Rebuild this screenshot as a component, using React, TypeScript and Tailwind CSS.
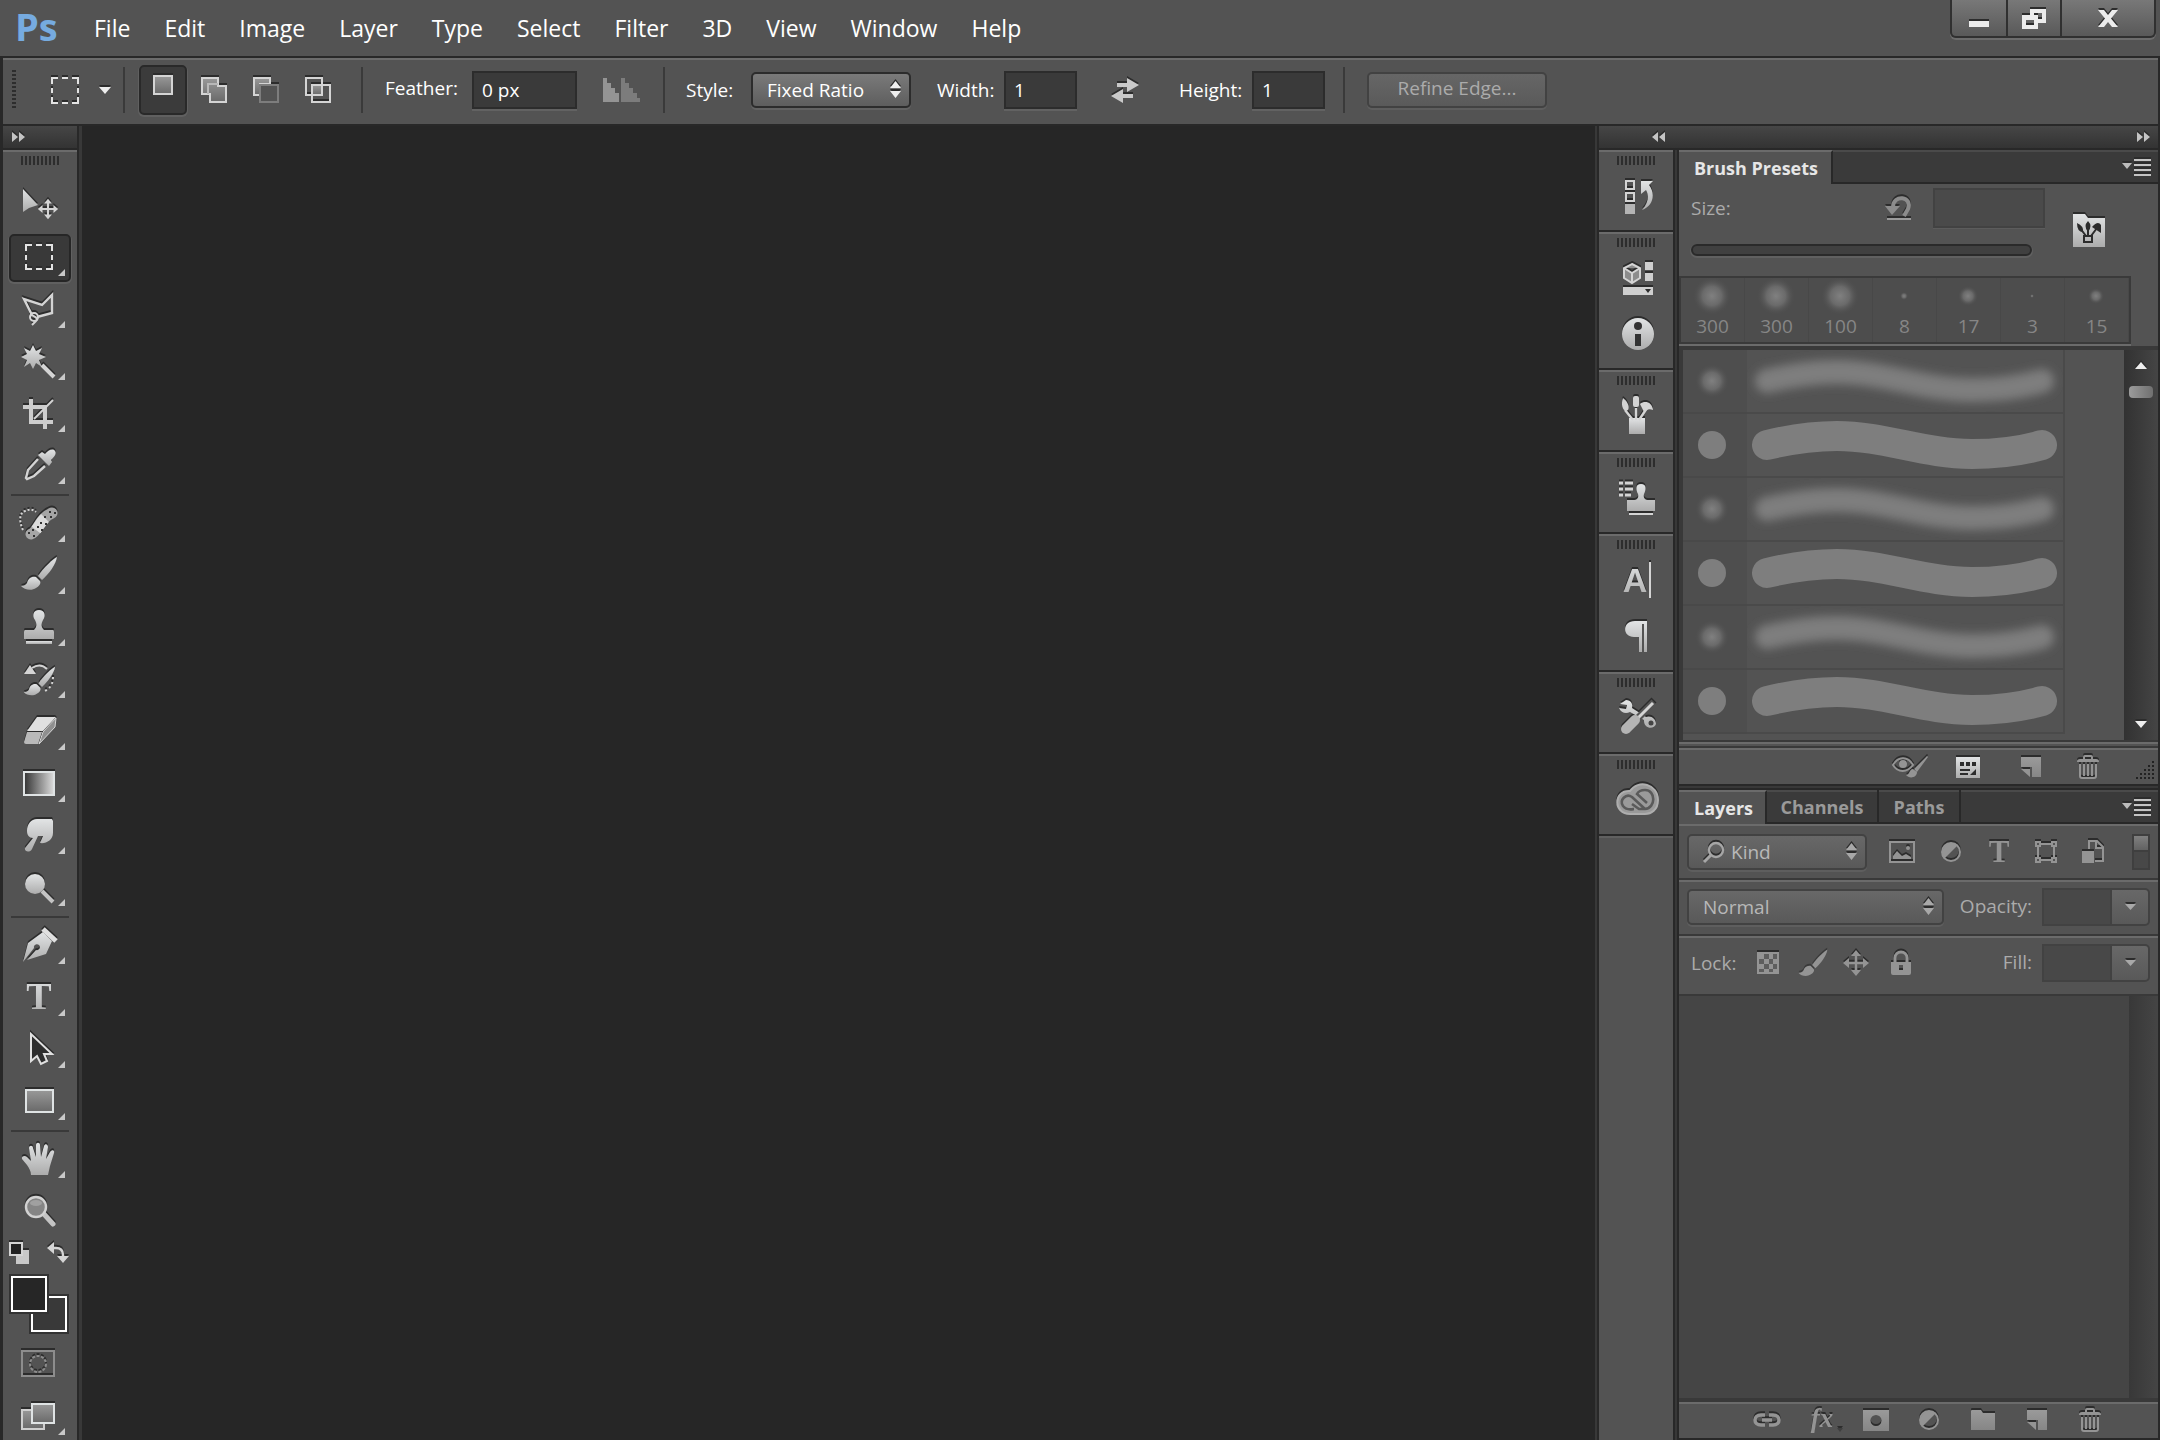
import type { ReactNode } from 'react'
import clsx from 'clsx'

type Shape = { w: number; h: number; children: ReactNode; className?: string }

function Icon({ w, h, children, className }: Shape) {
  return (
    <svg
      width={w}
      height={h}
      viewBox={`0 0 ${w} ${h}`}
      fill="none"
      aria-hidden="true"
      className={clsx('shrink-0 overflow-visible drop-shadow-[0_-2px_0_#2c2c2c]', className)}
    >
      {children}
    </svg>
  )
}

const LIGHT = '#d4d4d4'
const MUTED = '#949494'
const METAL = 'url(#metal)'

function Defs() {
  return (
    <svg width="0" height="0" className="absolute" aria-hidden="true">
      <defs>
        <linearGradient id="metal" x1="0" y1="0" x2="0" y2="1">
          <stop offset="0" stopColor="#e2e4e5" />
          <stop offset="1" stopColor="#acacac" />
        </linearGradient>
        <linearGradient id="dim" x1="0" y1="0" x2="0" y2="1">
          <stop offset="0" stopColor="#9a9a9a" />
          <stop offset="1" stopColor="#868686" />
        </linearGradient>
        <linearGradient id="plate" x1="0" y1="0" x2="0" y2="1">
          <stop offset="0" stopColor="#999" />
          <stop offset="1" stopColor="#696969" />
        </linearGradient>
        <linearGradient id="ramp" x1="0" y1="0" x2="1" y2="0">
          <stop offset="0" stopColor="#333" />
          <stop offset="1" stopColor="#ddd" />
        </linearGradient>
        <radialGradient id="dab">
          <stop offset="0" stopColor="#808080" />
          <stop offset="0.5" stopColor="#6a6a6a" />
          <stop offset="1" stopColor="#4f4f4f" stopOpacity="0" />
        </radialGradient>
        <filter id="soft" x="-10%" y="-150%" width="120%" height="400%">
          <feGaussianBlur stdDeviation="5" />
        </filter>
      </defs>
    </svg>
  )
}

/* shared glyphs */

function MovePath({ color }: { color: string }) {
  return (
    <g>
      <path d="M0 -8V8M-8 0H8" stroke={color} strokeWidth="2.6" />
      <path
        d="M0 -13L5 -7H-5ZM0 13L5 7H-5ZM-13 0L-7 -5V5ZM13 0L7 -5V5Z"
        fill={color}
      />
    </g>
  )
}

function BrushPath({ fill }: { fill: string }) {
  return (
    <g fill={fill}>
      <path d="M38 1C35 2 24 12 19 20L23 24C30 18 37 8 38 1Z" />
      <path d="M17 21C12 20 9 23 8 27C7 29 4 30 2 30C5 34 13 35 17 32C21 30 22 27 21 25Z" />
    </g>
  )
}

function StampPath({ fill }: { fill: string }) {
  return (
    <g fill={fill}>
      <path d="M20 2C14 2 13 8 16 12C18 16 18 19 15 22H6Q5 22 5 24V31H35V24Q35 22 34 22H25C22 19 22 16 24 12C27 8 26 2 20 2Z" />
      <rect x="7" y="33" width="26" height="3" />
    </g>
  )
}

function TrashIcon() {
  return (
    <Icon w={24} h={24}>
      <path d="M8 4V2Q8 1 9 1H15Q16 1 16 2V4" stroke={MUTED} strokeWidth="2" />
      <path d="M1 7Q1 4 4 4H20Q23 4 23 7Z" fill={MUTED} />
      <path d="M4 9V21Q4 23 6 23H18Q20 23 20 21V9M8 9V21M12 9V21M16 9V21" stroke={MUTED} strokeWidth="2" />
    </Icon>
  )
}

function NewIcon() {
  return (
    <Icon w={22} h={22}>
      <path d="M1 1H21V21H12V11H1Z" fill="url(#dim)" />
      <path d="M1 13H10V21Z" fill={MUTED} />
    </Icon>
  )
}

function AdjustIcon() {
  return (
    <Icon w={22} h={22}>
      <circle cx="11" cy="11" r="9" stroke={MUTED} strokeWidth="2" />
      <path d="M4 18A10 10 0 0 1 18 4Z" fill={MUTED} />
    </Icon>
  )
}

function PanelMenu({ label }: { label: string }) {
  return (
    <button type="button" aria-label={label} className="mr-[7px] ml-auto">
      <Icon w={29} h={18}>
        <path d="M0 5H10L5 11Z" fill="#bbb" />
        <path d="M12 2H29M12 7H29M12 12H29M12 17H29" stroke="#c4c4c4" strokeWidth="2" />
      </Icon>
    </button>
  )
}

function UpDown({ color }: { color: string }) {
  return (
    <Icon w={11} h={17} className="pointer-events-none absolute top-[9px] right-[10px]">
      <path d="M0 7L5.5 0L11 7ZM0 10H11L5.5 17Z" fill={color} />
    </Icon>
  )
}

function Grip() {
  return (
    <Icon w={38} h={9} className="mx-auto drop-shadow-none">
      <path d="M0 4.5H38" stroke="#2d2d2d" strokeWidth="9" strokeDasharray="2 2" />
    </Icon>
  )
}

/* left tools */

const tools: Record<string, ReactNode> = {
  Move: (
    <>
      <path d="M4 3V26L10 22L19 19Z" fill={METAL} />
      <g transform="translate(29 23) scale(.78)">
        <MovePath color={LIGHT} />
      </g>
    </>
  ),
  'Rectangular Marquee': (
    <path
      d="M7 13V7H13M17 7H23M27 7H33V13M33 17V22M33 26V31H27M23 31H17M13 31H7V26M7 22V17"
      stroke="#e3e3e3"
      strokeWidth="2"
    />
  ),
  'Polygonal Lasso': (
    <>
      <path d="M13 25L5 9L23 15L33 5V23L18 27" stroke={LIGHT} strokeWidth="2.4" />
      <circle cx="15" cy="27" r="4" stroke={LIGHT} strokeWidth="2" />
      <path d="M11 25C15 25 20 29 17 31L13 35" stroke={LIGHT} strokeWidth="2" />
    </>
  ),
  'Magic Wand': (
    <>
      <path
        d="M14 3L17 9L23 6L20 12L27 15L20 18L23 25L17 21L14 27L11 21L5 25L8 18L2 15L8 12L5 6L11 9Z"
        fill={METAL}
      />
      <path d="M23 23L35 35" stroke={LIGHT} strokeWidth="4" />
    </>
  ),
  Crop: (
    <>
      <path d="M12 5V28H34M4 13H26V35" stroke="#cdcdcd" strokeWidth="4" />
      <path d="M15 25L34 6" stroke={LIGHT} strokeWidth="2" />
    </>
  ),
  Eyedropper: (
    <>
      <path d="M26 8C29 4 34 2 36 5C38 8 35 11 32 14L33 16L30 20L19 9L23 6Z" fill={METAL} />
      <path d="M19 13L9 24L7 32L8 33L15 30L26 20" stroke={LIGHT} strokeWidth="2.4" />
    </>
  ),
  'Spot Healing Brush': (
    <>
      <path d="M4 26C0 18 0 9 6 7C10 5 14 5 17 8" stroke={LIGHT} strokeWidth="2" strokeDasharray="2 2" />
      <path d="M12 30C19 28 20 14 33 9" stroke="#a6a6a6" strokeWidth="11" strokeLinecap="round" />
      <path d="M17 26C20 22 22 18 26 14" stroke="#dcdcdc" strokeWidth="11" />
      <path d="M9 29h2M14 32h2M13 26h2M18 23h2M22 26h2M21 19h2M26 20h2M25 13h2M30 8h2M35 9h2M31 13h2" stroke="#333" strokeWidth="2" />
    </>
  ),
  Brush: <BrushPath fill={METAL} />,
  'Clone Stamp': <StampPath fill={METAL} />,
  'History Brush': (
    <>
      <path d="M5 14L11 5L17 14Z" fill={LIGHT} />
      <path d="M13 8C19 4 24 5 28 9" stroke={LIGHT} strokeWidth="2" />
      <g transform="translate(3 6) scale(.87)">
        <BrushPath fill={METAL} />
      </g>
      <path d="M34 17C34 23 32 28 26 31" stroke={LIGHT} strokeWidth="2" strokeDasharray="2 3" />
    </>
  ),
  Eraser: (
    <>
      <path d="M18 5H37L24 19H8Z" fill="#e0e0e0" />
      <path d="M8 20H23L19 32H7Q5 32 5 30Z" fill="#b9b9b9" />
      <path d="M37 6L36 15L20 32L24 20Z" fill="#8f8f8f" stroke={LIGHT} />
    </>
  ),
  Gradient: <rect x="5" y="8" width="30" height="23" fill="url(#ramp)" stroke="#dfe3e4" strokeWidth="2" />,
  Smudge: (
    <path
      d="M8 15C8 8 12 3 18 3H33L34 5V17C34 24 27 28 21 27L24 20L19 20L13 33C11 37 5 36 6 32L14 22C10 22 8 19 8 15Z"
      fill={METAL}
    />
  ),
  Dodge: (
    <>
      <circle cx="16" cy="16" r="10" fill={METAL} />
      <path d="M23 23L34 34" stroke="#c4c4c4" strokeWidth="4" />
    </>
  ),
  Pen: (
    <>
      <path d="M4 36L9 17L24 6L33 15L27 28L8 34L17 24A3 3 0 1 0 15 22Z" fill={METAL} />
      <path d="M24 3L37 15" stroke="#e0e0e0" strokeWidth="5" />
    </>
  ),
  Type: (
    <text x="20" y="31" textAnchor="middle" fill={METAL} className="font-['Liberation_Serif',serif] text-[38px] font-bold">
      T
    </text>
  ),
  'Path Selection': (
    <path d="M12 4V31L18 26L22 34L28 31L25 24H33Z" fill="#2d2d2d" stroke="#e0e0e0" strokeWidth="2" />
  ),
  Rectangle: <rect x="7" y="8" width="27" height="22" fill="url(#plate)" stroke="#dfe3e4" strokeWidth="2" />,
  Hand: (
    <path
      d="M12 35C12 31 10 28 8 25L3 19C2 16 6 15 8 17L12 21L10 8C10 5 14 5 14 8L17 17L17 5C17 2 21 2 21 5L22 17L25 6C26 3 29 4 29 7L27 19L31 12C33 9 36 10 35 13L31 26L29 35Z"
      fill={METAL}
    />
  ),
  Zoom: (
    <>
      <path d="M24 21L34 32" stroke="#c4c4c4" strokeWidth="5" strokeLinecap="round" />
      <circle cx="17" cy="15" r="10" fill="#858585" stroke="#d2d2d2" strokeWidth="2.4" />
      <ellipse cx="17" cy="11" rx="6" ry="3" fill="#a0a0a0" />
    </>
  ),
}

const toolGroups = [
  ['Move', 'Rectangular Marquee', 'Polygonal Lasso', 'Magic Wand', 'Crop', 'Eyedropper'],
  ['Spot Healing Brush', 'Brush', 'Clone Stamp', 'History Brush', 'Eraser', 'Gradient', 'Smudge', 'Dodge'],
  ['Pen', 'Type', 'Path Selection', 'Rectangle'],
  ['Hand', 'Zoom'],
]

function Corner() {
  return (
    <svg width="7" height="7" className="absolute right-1 bottom-1" aria-hidden="true">
      <path d="M7 0V7H0Z" fill="#c9c9c9" />
    </svg>
  )
}

function ToolButton({ name }: { name: string }) {
  const active = name === 'Rectangular Marquee'
  return (
    <div className="h-[52px] px-1.5 py-0.5">
      <button
        type="button"
        aria-label={name}
        className={clsx(
          'relative flex h-12 w-full items-center justify-center rounded-[5px] border-2 pr-0.5',
          active ? 'border-[#262626] bg-[#393939] shadow-[0_1px_0_1px_#606060]' : 'border-transparent',
        )}
      >
        <Icon w={40} h={40}>{tools[name]}</Icon>
        {name !== 'Move' && name !== 'Zoom' && <Corner />}
      </button>
    </div>
  )
}

function Toolbar() {
  return (
    <aside className="flex w-[76px] shrink-0 flex-col border-r-2 border-[#282828] bg-[#535353]">
      <header className="flex h-6 items-center border-b-2 border-[#282828] bg-linear-to-b from-[#464646] to-[#333] pl-[9px]">
        <button type="button" aria-label="Expand tools">
          <Icon w={13} h={10}>
            <path d="M0 0L6 5L0 10ZM7 0L13 5L7 10Z" fill="#c4c4c4" />
          </Icon>
        </button>
      </header>
      <div className="border-t-2 border-[#6b6b6b] pt-1">
        <Grip />
      </div>
      <nav aria-label="Tools" className="pt-[15px]">
        {toolGroups.map((group, i) => (
          <div key={group[0]}>
            {i > 0 && <hr className="mx-2 my-0.5 border-t-2 border-[#393939]" />}
            {group.map((name) => (
              <ToolButton key={name} name={name} />
            ))}
          </div>
        ))}
      </nav>
      <div className="flex h-[30px] items-center justify-between pr-2 pl-1.5">
        <button type="button" aria-label="Default colors">
          <Icon w={20} h={22}>
            <rect x="7" y="8" width="13" height="14" fill="#c8c8c8" />
            <rect x="1" y="1" width="12" height="12" fill="#222" stroke="#d4d4d4" strokeWidth="2" />
          </Icon>
        </button>
        <button type="button" aria-label="Switch colors">
          <Icon w={22} h={22}>
            <path d="M5 6H9Q16 6 16 13V15" stroke={LIGHT} strokeWidth="2.4" />
            <path d="M0 6L7 0V12ZM10 14H22L16 21Z" fill={LIGHT} />
          </Icon>
        </button>
      </div>
      <div className="mt-2 ml-2 grid size-14 grid-cols-[20px_16px_20px] grid-rows-[20px_16px_20px]">
        <button
          type="button"
          aria-label="Background color"
          className="col-span-2 col-start-2 row-span-2 row-start-2 border-2 border-white bg-[#393939] outline-2 outline-[#333]"
        />
        <button
          type="button"
          aria-label="Foreground color"
          className="z-10 col-span-2 col-start-1 row-span-2 row-start-1 border-2 border-white bg-[#262626] outline-2 outline-[#333]"
        />
      </div>
      <button type="button" aria-label="Quick mask" className="mx-auto mt-[18px] pr-1">
        <Icon w={34} h={28}>
          <rect x="1" y="1" width="32" height="25" stroke="#8d8d8d" strokeWidth="2" />
          <circle cx="17" cy="14" r="8" stroke="#8d8d8d" strokeWidth="2" strokeDasharray="3 1.5" />
        </Icon>
      </button>
      <button type="button" aria-label="Screen mode" className="relative mt-[25px] flex h-8 justify-center pr-1">
        <Icon w={34} h={28}>
          <rect x="1" y="7" width="22" height="19" fill="url(#plate)" stroke="#cfcfcf" strokeWidth="2" />
          <rect x="11" y="1" width="22" height="19" fill="url(#plate)" stroke="#dfe3e4" strokeWidth="2" />
        </Icon>
        <svg width="7" height="7" className="absolute right-3 bottom-0" aria-hidden="true">
          <path d="M7 0V7H0Z" fill="#c9c9c9" />
        </svg>
      </button>
    </aside>
  )
}

/* top bars */

const menus = ['File', 'Edit', 'Image', 'Layer', 'Type', 'Select', 'Filter', '3D', 'View', 'Window', 'Help']

function MenuBar() {
  return (
    <header className="flex h-[58px] items-start justify-between border-b-2 border-[#282828] bg-[#535353] pl-[15px]">
      <div className="flex h-14 items-center">
        <span className="w-[62px] pb-1 text-[38px] leading-none font-bold text-[#76abe0]">Ps</span>
        <nav className="flex text-[23px] text-white [text-shadow:0_-1px_0_#333]">
          {menus.map((m) => (
            <button key={m} type="button" className="px-[17px]">
              {m}
            </button>
          ))}
        </nav>
      </div>
      <div className="mr-1 flex h-[38px] divide-x-2 divide-[#303030] rounded-b-md border-2 border-t-0 border-[#303030] bg-linear-to-b from-[#787878] to-[#595959] shadow-[0_2px_0_#6c6c6c]">
        <button type="button" aria-label="Minimize" className="flex w-14 justify-center pt-[21px]">
          <Icon w={20} h={6}>
            <rect width="20" height="6" fill="#ececec" />
          </Icon>
        </button>
        <button type="button" aria-label="Restore" className="flex w-[54px] justify-center pt-[9px]">
          <Icon w={24} h={20}>
            <path d="M8 0H24V14H16V20H0V6H8ZM12 4V6H16V10H20V4ZM4 11V16H12V11Z" fill="#ececec" fillRule="evenodd" />
          </Icon>
        </button>
        <button type="button" aria-label="Close" className="flex w-[92px] justify-center pt-2.5">
          <Icon w={20} h={17}>
            <path d="M0 0H6L10 5L14 0H20L13 8.5L20 17H14L10 12L6 17H0L7 8.5Z" fill="#ececec" />
          </Icon>
        </button>
      </div>
    </header>
  )
}

function Divider({ className }: { className: string }) {
  return <span className={clsx('h-[46px] w-0.5 shrink-0 bg-[#3a3a3a]', className)} />
}

const field =
  'h-[38px] border-2 border-[#2c2c2c] bg-[#3a3a3a] px-2 text-[19px] text-white shadow-[0_2px_0_#626262] outline-none'

function OptionsBar() {
  return (
    <section
      aria-label="Tool options"
      className="flex h-[68px] items-center border-t-2 border-b-2 border-t-[#6b6b6b] border-b-[#282828] bg-[#535353] pb-1 text-[19px] text-white"
    >
      <svg width="4" height="40" className="ml-[9px] shrink-0" aria-hidden="true">
        <path d="M2 0V40" stroke="#2d2d2d" strokeWidth="4" strokeDasharray="2 2" />
      </svg>
      <button type="button" aria-label="Tool preset" className="ml-[35px] flex items-center gap-5">
        <Icon w={28} h={27}>
          <path
            d="M1 7V1H7M11 1H17M21 1H27V7M27 11V16M27 20V26H21M17 26H11M7 26H1V20M1 16V11"
            stroke="#e3e3e3"
            strokeWidth="2"
          />
        </Icon>
        <Icon w={12} h={7}>
          <path d="M0 0H12L6 7Z" fill="#eee" />
        </Icon>
      </button>
      <Divider className="ml-3" />
      <button
        type="button"
        aria-label="New selection"
        className="ml-[14px] flex h-[50px] w-[48px] justify-center rounded-[5px] border-2 border-[#292929] bg-[#3b3b3b] pt-2 shadow-[0_1px_0_1px_#606060]"
      >
        <Icon w={20} h={20}>
          <rect x="1" y="1" width="18" height="18" fill="url(#plate)" stroke={LIGHT} strokeWidth="2" />
        </Icon>
      </button>
      <div className="ml-[14px] flex gap-[26px]">
        <button type="button" aria-label="Add to selection">
          <Icon w={26} h={26}>
            <path d="M1 1H17V9H25V25H9V17H1Z" fill="url(#plate)" stroke={LIGHT} strokeWidth="2" />
            <path d="M7 17V7H17" stroke="#b8b8b8" strokeWidth="2" />
          </Icon>
        </button>
        <button type="button" aria-label="Subtract from selection">
          <Icon w={26} h={26}>
            <path d="M1 1H17V7H7V18H1Z" fill="url(#plate)" stroke={LIGHT} strokeWidth="2" />
            <rect x="7" y="8" width="18" height="17" fill="#535353" stroke="#7d7d7d" strokeWidth="2" />
          </Icon>
        </button>
        <button type="button" aria-label="Intersect with selection">
          <Icon w={26} h={26}>
            <rect x="7" y="8" width="10" height="10" fill="url(#plate)" />
            <path d="M1 1H17V18H1ZM7 8H25V25H7Z" stroke={LIGHT} strokeWidth="2" />
          </Icon>
        </button>
      </div>
      <Divider className="ml-[30px]" />
      <label htmlFor="feather" className="ml-[22px] w-[87px] pb-1">
        Feather:
      </label>
      <input id="feather" defaultValue="0 px" className={clsx(field, 'w-[105px]')} />
      <button type="button" aria-label="Anti-alias" className="ml-[26px]">
        <Icon w={37} h={24} className="drop-shadow-none">
          <path d="M0 0H4V5H8V10H12V15H16V24H0Z" fill="#949494" />
          <path d="M18 0H22V5H26V10H30V15H34V20H37V24H18Z" fill="#7c7c7c" />
        </Icon>
      </button>
      <Divider className="ml-[23px]" />
      <label htmlFor="style" className="ml-[21px] w-[65px]">
        Style:
      </label>
      <span className="relative">
        <select
          id="style"
          className="h-9 w-[160px] appearance-none rounded-[5px] border-2 border-[#2c2c2c] bg-linear-to-b from-[#7a7a7a] to-[#5e5e5e] pl-3.5 text-white shadow-[0_2px_0_#626262]"
        >
          <option>Fixed Ratio</option>
        </select>
        <UpDown color="#eee" />
      </span>
      <label htmlFor="width" className="ml-[26px] w-[67px]">
        Width:
      </label>
      <input id="width" defaultValue="1" className={clsx(field, 'w-[73px]')} />
      <button type="button" aria-label="Swap width and height" className="ml-[34px]">
        <Icon w={28} h={26}>
          <path d="M6 6H16V1L28 8L16 15V10H6ZM22 17H12V12L0 19L12 26V21H22Z" fill="#c9c9c9" />
        </Icon>
      </button>
      <label htmlFor="height" className="ml-10 w-[73px]">
        Height:
      </label>
      <input id="height" defaultValue="1" className={clsx(field, 'w-[73px]')} />
      <Divider className="ml-[18px]" />
      <button
        type="button"
        className="ml-[22px] h-9 w-[180px] rounded-[5px] border-2 border-[#424242] bg-linear-to-b from-[#666] to-[#5a5a5a] pb-1 text-[#ababab] shadow-[0_2px_0_#5e5e5e]"
      >
        Refine Edge...
      </button>
    </section>
  )
}

/* collapsed panels */

const docks: { name: string; icon: ReactNode }[][] = [
  [
    {
      name: 'History',
      icon: (
        <>
          <path d="M8 5H16V13H8ZM8 17H16V25H8Z" stroke={LIGHT} strokeWidth="2" />
          <rect x="7" y="28" width="10" height="10" fill="#b4b4b4" />
          <path d="M23 5H35L31 9C38 18 35 30 24 34C31 26 31 19 28 14L23 18Z" fill={METAL} />
        </>
      ),
    },
  ],
  [
    {
      name: 'Properties',
      icon: (
        <>
          <path d="M14 6L22 10V20L14 25L6 20V10ZM6 10L14 15L22 10M14 15V25" fill="#8c8c8c" stroke={LIGHT} strokeWidth="2" />
          <path d="M27 4H35V12H27ZM27 15H35V23H27ZM5 29H35V37H5Z" fill="#cfcfcf" />
          <path d="M27 31H33L30 35Z" fill="#2c2c2c" />
        </>
      ),
    },
    {
      name: 'Info',
      icon: (
        <>
          <circle cx="20" cy="20" r="16" fill={METAL} />
          <circle cx="20" cy="12" r="4" fill="#333" />
          <path d="M17 20H23V32H17Z" fill="#333" />
        </>
      ),
    },
  ],
  [
    {
      name: 'Brush',
      icon: (
        <>
          <path d="M11 22H27V38H11Z" fill={METAL} />
          <path d="M7 14L15 24M18 12V24M29 12L21 24" stroke={LIGHT} strokeWidth="2.4" />
          <path d="M5 2C9 5 12 10 10 14C6 17 2 10 5 2Z" fill={LIGHT} />
          <rect x="15" y="0" width="6" height="11" rx="2" fill={LIGHT} />
          <path d="M22 8C27 4 34 6 35 14C31 12 28 14 26 16Z" fill={LIGHT} />
        </>
      ),
    },
  ],
  [
    {
      name: 'Clone Source',
      icon: (
        <>
          <path d="M1 5H5M7 5H15M1 11H5M7 11H15M1 17H5M7 17H13" stroke={LIGHT} strokeWidth="3" />
          <path d="M23 6C17 6 18 12 20 16C21 20 19 22 15 22H9V33H37V22H31C27 22 25 20 26 16C28 12 29 6 23 6Z" fill={METAL} />
          <rect x="11" y="35" width="24" height="2" fill={LIGHT} />
        </>
      ),
    },
  ],
  [
    {
      name: 'Character',
      icon: (
        <>
          <text x="17" y="32" textAnchor="middle" fill={METAL} className="font-['Liberation_Sans',sans-serif] text-[34px] font-bold">
            A
          </text>
          <path d="M32 2V38" stroke={LIGHT} strokeWidth="2" />
        </>
      ),
    },
    {
      name: 'Paragraph',
      icon: <path d="M17 5H29V36H26V8H24V36H21V21H16C4 21 4 5 17 5Z" fill={METAL} />,
    },
  ],
  [
    {
      name: 'Tool Presets',
      icon: (
        <>
          <path
            d="M2 6L8 2C13 2 15 6 14 10L28 19C33 17 38 21 38 26C37 30 31 31 28 28C26 26 26 24 26 22L12 14C8 16 3 15 1 10L8 11L9 7Z"
            fill={METAL}
          />
          <circle cx="33" cy="25" r="2.5" fill="#444" />
          <path d="M36 4L18 22" stroke="#535353" strokeWidth="7" />
          <path d="M35 5L18 22" stroke={LIGHT} strokeWidth="3" />
          <path d="M17 22L8 31" stroke="#b4b4b4" strokeWidth="10" strokeLinecap="round" />
        </>
      ),
    },
  ],
  [
    {
      name: 'Creative Cloud',
      icon: (
        <>
          <path
            d="M12 34C-5 34 -5 10 12 11C20 -1 40 4 40 20C40 30 33 34 27 34Z"
            fill="#9a9a9a"
            stroke="#aeaeae"
            strokeWidth="2"
          />
          <path
            d="M27 29L14 17C8 13 1 20 5 26C9 31 15 29 16 29M14 24L21 29H27C38 28 38 10 27 10C22 10 20 12 19 14L29 23"
            stroke="#5a5a5a"
            strokeWidth="2.6"
          />
        </>
      ),
    },
  ],
]

function IconDock() {
  return (
    <aside className="w-[76px] shrink-0 border-r-2 border-[#282828] bg-[#535353]">
      {docks.map((group) => (
        <div key={group[0].name} className="border-t-2 border-b-2 border-t-[#6b6b6b] border-b-[#282828] pt-1 pb-1.5">
          <Grip />
          <div className="pt-[3px]">
            {group.map((d) => (
              <button key={d.name} type="button" aria-label={d.name} className="flex h-14 w-full items-center justify-center pl-1">
                <Icon w={40} h={40}>{d.icon}</Icon>
              </button>
            ))}
          </div>
        </div>
      ))}
      <div className="border-t-2 border-[#606060]" />
    </aside>
  )
}

/* brush presets */

const tips = [
  { size: 300, r: 19 },
  { size: 300, r: 19 },
  { size: 100, r: 19 },
  { size: 8, r: 4 },
  { size: 17, r: 10 },
  { size: 3, r: 2 },
  { size: 15, r: 8 },
]

const strokes = ['soft', 'hard', 'soft', 'hard', 'soft', 'hard']

const CURVE = 'M20 31C45 25 65 22 90 22C137 22 177 40 225 40C252 40 274 37 295 31'

function BrushRow({ kind }: { kind: string }) {
  const soft = kind === 'soft'
  return (
    <li className="flex h-16 shrink-0">
      <span className="w-16 border-b-2 border-[#494949] bg-[#4e4e4e]">
        <svg width="58" height="62" aria-hidden="true">
          {soft ? <circle cx="29" cy="31" r="17" fill="url(#dab)" /> : <circle cx="29" cy="31" r="14" fill="#7e7e7e" />}
        </svg>
      </span>
      <span className="w-[318px] border-r-2 border-b-2 border-[#4a4a4a]">
        <svg width="316" height="62" aria-hidden="true">
          <path
            d={CURVE}
            fill="none"
            stroke="#7e7e7e"
            strokeWidth={soft ? 24 : 30}
            strokeLinecap="round"
            filter={soft ? 'url(#soft)' : undefined}
          />
        </svg>
      </span>
    </li>
  )
}

const tab = 'flex h-[34px] items-center border-r-2 border-[#282828] text-[18px] font-bold'
const activeTab = 'border-t-2 border-t-[#6b6b6b] bg-[#535353] text-[#e6e6e6]'

function BrushPresets() {
  return (
    <section aria-label="Brush Presets" className="bg-[#535353]">
      <header className="flex h-[34px] items-center bg-[#3a3a3a] shadow-[inset_0_2px_0_#4a4a4a,inset_0_-2px_0_#282828]">
        <h2 className={clsx(tab, activeTab, 'w-[154px] pl-[15px]')}>Brush Presets</h2>
        <PanelMenu label="Brush presets menu" />
      </header>
      <div className="flex h-[92px]">
        <div className="w-[366px] pl-3">
          <div className="flex items-center pt-1">
            <label htmlFor="size" className="flex-1 text-[19px] text-[#ababab]">
              Size:
            </label>
            <button type="button" aria-label="Reset size" className="mr-[20px]">
              <Icon w={28} h={26}>
                <path d="M8 12C8 -1 28 1 23 14L19 21" stroke="#8c8c8c" strokeWidth="4" />
                <path d="M0 11H15L7 20Z" fill="#8c8c8c" />
                <path d="M2 24H26" stroke="#9a9a9a" strokeWidth="2" />
              </Icon>
            </button>
            <input id="size" className="h-10 w-[112px] border-2 border-[#424242] bg-[#4a4a4a] shadow-[0_1px_0_#5c5c5c]" />
          </div>
          <input
            type="range"
            aria-label="Brush size"
            className="mt-4 block h-3 w-[341px] appearance-none rounded-full border-2 border-[#2a2a2a] bg-[#404040] shadow-[0_1px_0_1px_#606060] [&::-webkit-slider-thumb]:appearance-none"
          />
        </div>
        <button type="button" aria-label="Brush panel" className="ml-[28px] self-center">
          <Icon w={32} h={33}>
            <path d="M0 0H12L15 4H32V33H0Z" fill={METAL} />
            <path d="M11 22H19V28H11Z" stroke="#2c2c2c" strokeWidth="2" />
            <path d="M7 14L13 22M15 14V22M24 14L18 22" stroke="#2c2c2c" strokeWidth="2" />
            <path d="M4 9Q11 12 10 18Q4 18 4 9ZM15 7Q20 12 15 18Q10 12 15 7ZM19 13Q25 6 28 11V19Z" fill="#2c2c2c" />
          </Icon>
        </button>
      </div>
      <ul className="mr-[27px] flex h-[68px] border-2 border-[#3a3a3a] bg-[#4d4d4d] shadow-[0_2px_0_#6b6b6b]">
        {tips.map((t, i) => (
          <li key={i} className="flex flex-1 flex-col items-center border-r border-[#484848] text-[19px] leading-6 text-[#868686]">
            <svg width="40" height="36" aria-hidden="true">
              <circle cx="19" cy="18" r={t.r} fill="url(#dab)" />
            </svg>
            {t.size}
          </li>
        ))}
      </ul>
      <div className="mt-0.5 flex h-[396px] border-t-4 border-b-2 border-l-4 border-[#393939]">
        <ul className="flex-1 overflow-hidden">
          {strokes.map((kind, i) => (
            <BrushRow key={i} kind={kind} />
          ))}
        </ul>
        <div className="flex w-[34px] flex-col items-center bg-linear-to-r from-[#323232] to-[#454545] pt-3 pb-3">
          <Icon w={12} h={7}>
            <path d="M0 7H12L6 0Z" fill="#eee" />
          </Icon>
          <span className="mt-[17px] h-3 w-6 rounded bg-linear-to-r from-[#9c9c9c] to-[#707070]" />
          <Icon w={12} h={7} className="mt-auto">
            <path d="M0 0H12L6 7Z" fill="#eee" />
          </Icon>
        </div>
      </div>
      <div className="h-1.5 border-t-2 border-b-2 border-t-[#6b6b6b] border-b-[#393939]" />
      <footer className="flex h-9 items-center justify-end border-t-2 border-[#6b6b6b] pr-0.5">
        <button type="button" aria-label="Toggle live preview" className="mr-7">
          <Icon w={36} h={22}>
            <path d="M1 9C6 0 16 0 21 9C15 17 6 17 1 9Z" stroke={MUTED} strokeWidth="2" />
            <circle cx="11" cy="8" r="4" fill={MUTED} />
            <path d="M35 0L22 13L25 16L36 1ZM21 13C17 13 18 19 14 19C17 23 25 22 25 16Z" fill={MUTED} />
          </Icon>
        </button>
        <button type="button" aria-label="Preset manager" className="mr-[40px]">
          <Icon w={24} h={21}>
            <path d="M0 0H24V21H0Z" fill={METAL} />
            <path d="M4 5H8V9H4ZM10 5H14V9H10ZM16 5H20V9H16ZM4 12H14V14H4ZM4 16H12V18H4ZM20 12V18H14Z" fill="#2c2c2c" />
          </Icon>
        </button>
        <button type="button" aria-label="New brush" className="mr-[34px]">
          <NewIcon />
        </button>
        <button type="button" aria-label="Delete brush" className="mr-[36px]">
          <TrashIcon />
        </button>
        <svg width="20" height="20" className="mt-1.5" aria-hidden="true">
          <path
            d="M0 18H20M4 14H20M8 10H20M12 6H20M16 2H20"
            stroke="#222"
            strokeWidth="2"
            strokeDasharray="2 2"
          />
        </svg>
      </footer>
    </section>
  )
}

/* layers */

const mutedSelect =
  'h-9 w-full appearance-none rounded-[5px] border-2 border-[#424242] bg-linear-to-b from-[#686868] to-[#595959] text-[19px] text-[#b8b8b8] shadow-[0_2px_0_#5e5e5e]'

function Percent({ id, label }: { id: string; label: string }) {
  return (
    <>
      <label htmlFor={id} className="ml-auto pb-0.5">
        {label}
      </label>
      <div className="ml-2.5 flex">
        <input id={id} className="h-[38px] w-[70px] border-2 border-[#424242] bg-[#484848]" />
        <button
          type="button"
          aria-label={`${label} slider`}
          className="flex w-[38px] items-center justify-center rounded-r-[5px] border-2 border-l-0 border-[#424242] bg-linear-to-b from-[#686868] to-[#595959]"
        >
          <Icon w={11} h={6}>
            <path d="M0 0H11L5.5 6Z" fill="#a8a8a8" />
          </Icon>
        </button>
      </div>
    </>
  )
}

function Layers() {
  return (
    <section aria-label="Layers" className="flex flex-1 flex-col bg-[#535353] text-[19px] text-[#ababab]">
      <header className="flex h-[34px] items-center bg-[#3a3a3a] shadow-[inset_0_2px_0_#4a4a4a,inset_0_-2px_0_#282828]">
        <button type="button" className={clsx(tab, activeTab, 'w-[88px] pl-[15px]')}>
          Layers
        </button>
        <button type="button" className={clsx(tab, 'w-[112px] justify-center text-[#9a9a9a]')}>
          Channels
        </button>
        <button type="button" className={clsx(tab, 'w-[82px] justify-center text-[#9a9a9a]')}>
          Paths
        </button>
        <PanelMenu label="Layers menu" />
      </header>
      <div className="flex h-14 items-center border-t-2 border-b-2 border-t-[#6b6b6b] border-b-[#393939] pr-2 pl-2">
        <span className="relative w-[180px]">
          <select aria-label="Filter type" className={clsx(mutedSelect, 'pl-[42px]')}>
            <option>Kind</option>
          </select>
          <Icon w={22} h={22} className="pointer-events-none absolute top-2 left-4">
            <circle cx="13" cy="8" r="7" stroke="#a6a6a6" strokeWidth="2.4" />
            <path d="M8 13L1 20" stroke="#a6a6a6" strokeWidth="3" />
          </Icon>
          <UpDown color="#a8a8a8" />
        </span>
        <div className="flex flex-1 items-center justify-between pr-7 pl-[22px]">
          <button type="button" aria-label="Pixel layers">
            <Icon w={26} h={22}>
              <rect x="1" y="1" width="24" height="20" stroke={MUTED} strokeWidth="2" />
              <path d="M4 18V15L8 10L13 15L17 13L22 16V18Z" fill={MUTED} />
              <circle cx="19" cy="7" r="2" fill={MUTED} />
            </Icon>
          </button>
          <button type="button" aria-label="Adjustment layers">
            <AdjustIcon />
          </button>
          <button type="button" aria-label="Type layers">
            <Icon w={22} h={22}>
              <text x="11" y="21" textAnchor="middle" fill={MUTED} className="font-['Liberation_Serif',serif] text-[31px] font-bold">
                T
              </text>
            </Icon>
          </button>
          <button type="button" aria-label="Shape layers">
            <Icon w={22} h={22}>
              <path d="M3 3H19V19H3Z" stroke={MUTED} strokeWidth="2" />
              <path d="M1 1H5V5H1ZM17 1H21V5H17ZM1 17H5V21H1ZM17 17H21V21H17Z" fill="#535353" stroke={MUTED} strokeWidth="2" />
            </Icon>
          </button>
          <button type="button" aria-label="Smart objects">
            <Icon w={22} h={24}>
              <path d="M7 9V1H15L21 7V21H13M14 1V8H21" stroke={MUTED} strokeWidth="2" />
              <path d="M0 11H12V23H0Z" fill={MUTED} />
            </Icon>
          </button>
        </div>
        <button
          type="button"
          aria-label="Toggle filtering"
          className="flex h-9 w-[18px] flex-col border-2 border-[#3f3f3f] bg-[#484848]"
        >
          <span className="h-4 w-full border-b-2 border-[#3f3f3f] bg-linear-to-b from-[#808080] to-[#626262]" />
        </button>
      </div>
      <div className="flex h-14 items-center border-t-2 border-b-2 border-t-[#6b6b6b] border-b-[#393939] pr-2 pb-0.5 pl-2">
        <span className="relative w-[257px]">
          <select aria-label="Blend mode" className={clsx(mutedSelect, 'pl-3.5')}>
            <option>Normal</option>
          </select>
          <UpDown color="#a8a8a8" />
        </span>
        <Percent id="opacity" label="Opacity:" />
      </div>
      <div className="flex h-[60px] items-center border-t-2 border-b-2 border-t-[#6b6b6b] border-b-[#393939] pr-2 pb-1.5 pl-3">
        <span className="w-[66px]">Lock:</span>
        <div className="flex items-center">
          <button type="button" aria-label="Lock transparency">
            <Icon w={22} h={22}>
              <path d="M0 0H22V22H0Z" fill={MUTED} />
              <path d="M7 2H12V7H7ZM16 2H20V7H16ZM2 7H7V12H2ZM12 7H16V12H12ZM7 12H12V17H7ZM16 12H20V17H16ZM2 17H7V20H2ZM12 17H16V20H12Z" fill="#5e5e5e" />
            </Icon>
          </button>
          <button type="button" aria-label="Lock pixels" className="ml-[18px]">
            <svg width="32" height="28" viewBox="1 0 38 35" fill="none" aria-hidden="true" className="drop-shadow-[0_-2px_0_#3a3a3a]">
              <BrushPath fill={MUTED} />
            </svg>
          </button>
          <button type="button" aria-label="Lock position" className="ml-[14px]">
            <Icon w={26} h={26}>
              <g transform="translate(13 13)">
                <MovePath color={MUTED} />
              </g>
            </Icon>
          </button>
          <button type="button" aria-label="Lock all" className="ml-[22px]">
            <Icon w={20} h={24}>
              <path d="M4 11V7C4 -1 16 -1 16 7V11" stroke={MUTED} strokeWidth="3" />
              <path d="M0 11H20V22Q20 24 18 24H2Q0 24 0 22ZM8 14V19H12V14Z" fill={MUTED} fillRule="evenodd" />
            </Icon>
          </button>
        </div>
        <Percent id="fill" label="Fill:" />
      </div>
      <div className="flex flex-1 bg-[#454545]">
        <span className="ml-auto w-[29px] bg-linear-to-r from-[#383838] to-[#454545]" />
      </div>
      <footer className="flex h-[42px] items-center border-t-4 border-b-2 border-t-[#393939] border-b-[#282828] pl-[74px] shadow-[inset_0_2px_0_#6b6b6b]">
        <button type="button" aria-label="Link layers">
          <Icon w={28} h={16}>
            <path d="M12 3H8C0 3 0 13 8 13H12M16 3H20C28 3 28 13 20 13H16M9 8H19" stroke={MUTED} strokeWidth="3.5" />
          </Icon>
        </button>
        <button type="button" aria-label="Layer style" className="ml-[30px]">
          <Icon w={24} h={24}>
            <text x="11" y="19" textAnchor="middle" fill={MUTED} className="font-['Liberation_Serif',serif] text-[27px] font-bold italic">
              fx
            </text>
            <path d="M26 20H32L29 24Z" fill="#3f3f3f" />
          </Icon>
        </button>
        <button type="button" aria-label="Add mask" className="ml-[28px]">
          <Icon w={26} h={21}>
            <path d="M0 0H26V21H0ZM13 5A5.5 5.5 0 1 0 13 16A5.5 5.5 0 1 0 13 5Z" fill="url(#dim)" fillRule="evenodd" />
          </Icon>
        </button>
        <button type="button" aria-label="New adjustment layer" className="ml-[29px]">
          <AdjustIcon />
        </button>
        <button type="button" aria-label="New group" className="ml-[31px]">
          <Icon w={24} h={20}>
            <path d="M0 1Q0 0 1 0H10L12 3H24V20H0Z" fill="url(#dim)" />
          </Icon>
        </button>
        <button type="button" aria-label="New layer" className="ml-[31px]">
          <NewIcon />
        </button>
        <button type="button" aria-label="Delete layer" className="ml-[30px]">
          <TrashIcon />
        </button>
      </footer>
    </section>
  )
}

export default function App() {
  return (
    <div className="flex min-h-screen flex-col bg-[#282828] font-['Open_Sans','Noto_Sans',sans-serif]">
      <Defs />
      <MenuBar />
      <div className="flex flex-1 flex-col pr-0.5 pl-[3px]">
        <OptionsBar />
        <div className="flex flex-1">
          <Toolbar />
          <main aria-label="Canvas" className="flex-1 border-r-2 border-l-3 border-[#383838] bg-[#262626]" />
          <div className="flex w-[561px] shrink-0 flex-col border-l-2 border-[#282828]">
            <header className="flex h-6 items-center justify-between border-b-2 border-[#282828] bg-linear-to-b from-[#464646] to-[#333] pr-2 pl-[53px]">
              <button type="button" aria-label="Expand icons">
                <Icon w={13} h={10}>
                  <path d="M6 0L0 5L6 10ZM13 0L7 5L13 10Z" fill="#c4c4c4" />
                </Icon>
              </button>
              <button type="button" aria-label="Collapse panels">
                <Icon w={13} h={10}>
                  <path d="M0 0L6 5L0 10ZM7 0L13 5L7 10Z" fill="#c4c4c4" />
                </Icon>
              </button>
            </header>
            <div className="flex flex-1">
              <IconDock />
              <div className="flex flex-1 flex-col border-l-2 border-[#383838]">
                <div className="flex flex-1 flex-col border-l-2 border-[#282828]">
                  <BrushPresets />
                  <div className="h-1.5 border-t-2 border-b-2 border-[#282828] bg-[#383838]" />
                  <Layers />
                </div>
              </div>
            </div>
          </div>
        </div>
      </div>
    </div>
  )
}
